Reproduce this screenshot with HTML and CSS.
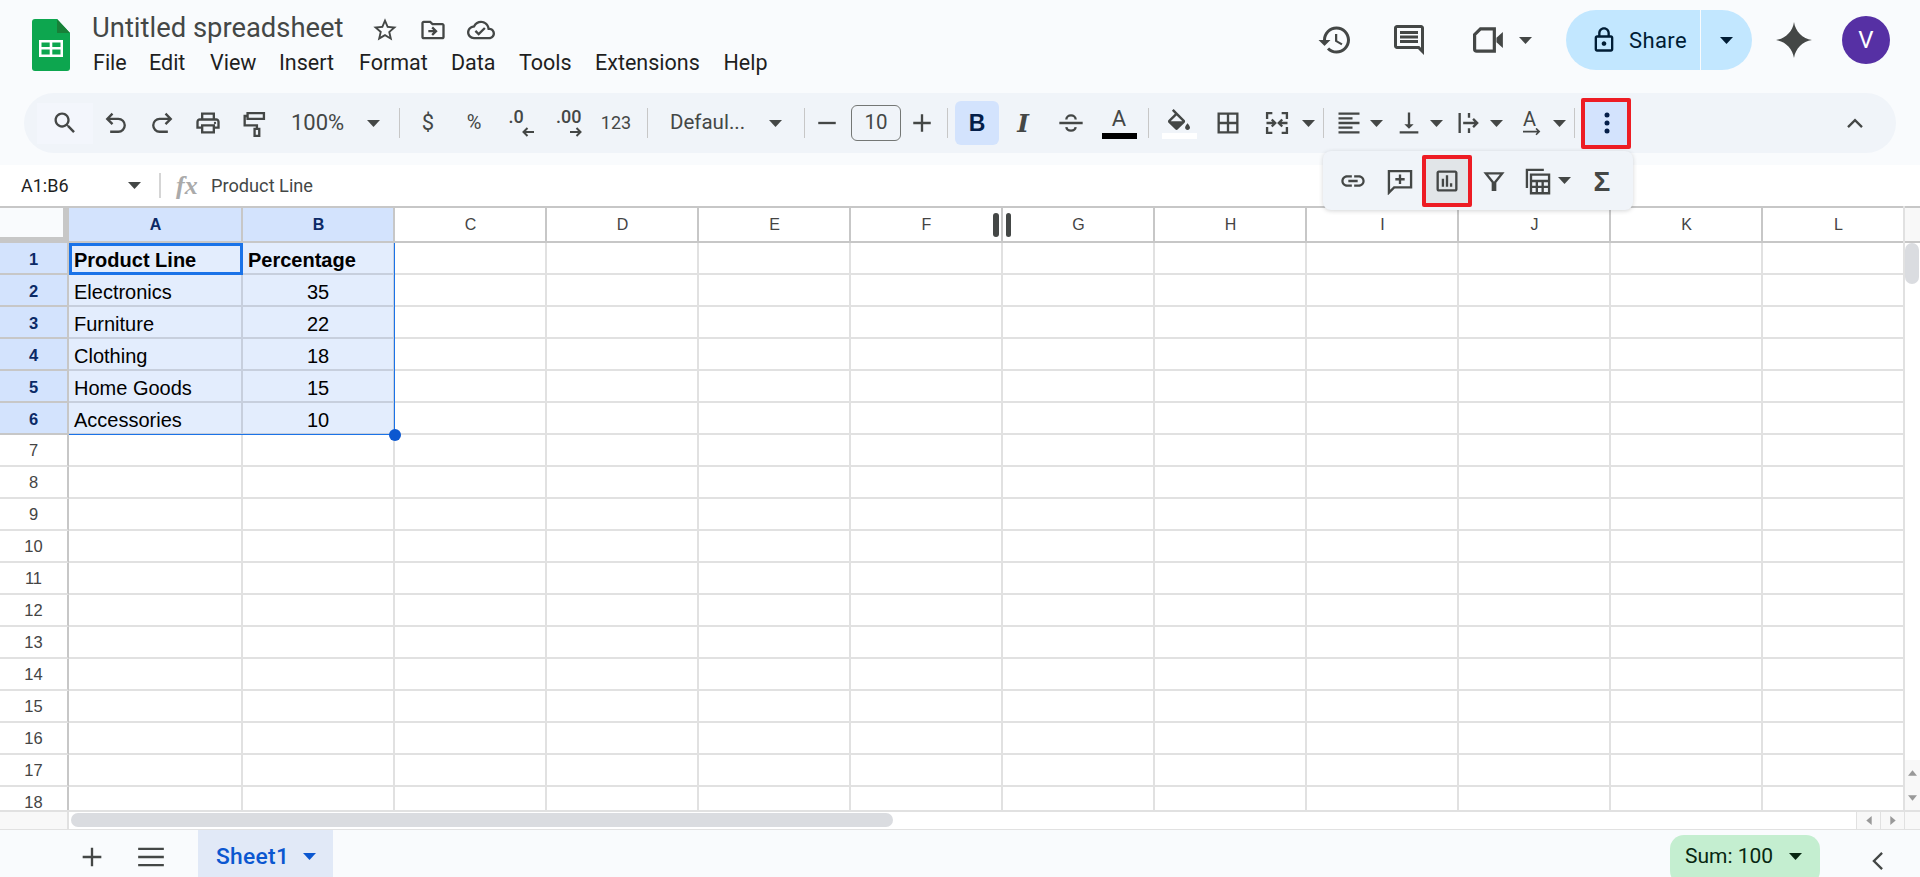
FILE: index.html
```html
<!DOCTYPE html>
<html lang="en">
<head>
<meta charset="utf-8">
<title>Untitled spreadsheet</title>
<link rel="stylesheet" href="styles.css">
</head>
<body>
<svg class="defs" aria-hidden="true"><symbol id="caret" viewBox="0 0 13 7"><path d="M0 0h13L6.5 7z"/></symbol></svg>
<header class="chrome">
  <div class="topbar">
    <svg class="logo" viewBox="0 0 38 52"><path class="logo-body" d="M3 0h22l13 14v35a3 3 0 0 1-3 3H3a3 3 0 0 1-3-3V3a3 3 0 0 1 3-3z"/><path class="logo-fold" d="M25 0l13 14H25z"/><path class="logo-grid" d="M7 21h24v17H7zm2.500 2.500v4.500h8.200v-4.500zm10.800 0v4.500h8.200v-4.500zM9.500 30.500v5h8.200v-5zm10.800 0v5h8.200v-5z" fill-rule="evenodd"/></svg>
    <div class="docinfo">
      <div class="titlerow">
        <span class="doctitle">Untitled spreadsheet</span>
        <svg class="ic title-star" viewBox="0 0 24 24"><path d="M22 9.240l-7.190-.620L12 2 9.190 8.630 2 9.240l5.460 4.730L5.820 21 12 17.270 18.180 21l-1.630-7.030L22 9.240zM12 15.400l-3.760 2.270 1-4.280-3.320-2.880 4.380-.380L12 6.100l1.710 4.040 4.380.380-3.320 2.880 1 4.280L12 15.400z"/></svg>
        <svg class="ic title-folder" viewBox="0 0 24 24"><path d="M20 6h-8l-2-2H4c-1.100 0-1.990.9-1.990 2L2 18c0 1.100.9 2 2 2h16c1.100 0 2-.9 2-2V8c0-1.100-.9-2-2-2zm0 12H4V6h5.170l2 2H20v10zm-8.010-9l-1.410 1.410L12.160 12H8v2h4.160l-1.590 1.590L11.990 17 16 13.010 11.990 9z"/></svg>
        <svg class="ic title-cloud" viewBox="0 0 24 24"><path d="M19.350 10.040C18.670 6.590 15.640 4 12 4 9.110 4 6.600 5.640 5.350 8.040 2.340 8.360 0 10.910 0 14c0 3.310 2.690 6 6 6h13c2.760 0 5-2.240 5-5 0-2.640-2.050-4.780-4.650-4.960zM19 18H6c-2.210 0-4-1.790-4-4 0-2.050 1.530-3.760 3.560-3.970l1.070-.110.5-.95C8.080 7.140 9.940 6 12 6c2.620 0 4.880 1.860 5.390 4.430l.3 1.500 1.530.11c1.560.1 2.780 1.410 2.780 2.960 0 1.650-1.350 3-3 3zm-9-3.820l-2.090-2.090L6.500 13.500 10 17l6.010-6.010-1.410-1.410z"/></svg>
      </div>
      <nav class="menus">
        <span class="m-file">File</span><span class="m-edit">Edit</span><span class="m-view">View</span><span class="m-insert">Insert</span><span class="m-format">Format</span><span class="m-data">Data</span><span class="m-tools">Tools</span><span class="m-ext">Extensions</span><span>Help</span>
      </nav>
    </div>
    <div class="actions">
      <svg class="ic act-history" viewBox="0 0 24 24"><path d="M13 3c-4.970 0-9 4.030-9 9H1l3.890 3.890.07.14L9 12H6c0-3.870 3.130-7 7-7s7 3.130 7 7-3.130 7-7 7c-1.930 0-3.680-.79-4.940-2.060l-1.420 1.420C8.270 19.990 10.510 21 13 21c4.970 0 9-4.030 9-9s-4.030-9-9-9zm-1 5v5l4.280 2.540.72-1.210-3.500-2.080V8H12z"/></svg>
      <svg class="ic act-comment" viewBox="0 0 24 24"><path d="M20 2H4c-1.100 0-2 .9-2 2v12c0 1.100.9 2 2 2h14l4 4V4c0-1.100-.9-2-2-2zm0 15.170L18.830 16H4V4h16v13.170zM6 12h12v2H6zm0-3h12v2H6zm0-3h12v2H6z"/></svg>
      <svg class="act-camera" viewBox="0 0 30 24"><path class="cam-body" d="M7 1.500H20V22.500H3.500A2 2 0 0 1 1.500 20.500V7z"/><path d="M22 10l6-5.500v15L22 14z"/></svg>
      <svg class="caret act-caret"><use href="#caret"/></svg>
      <div class="share">
        <div class="share-main">
          <svg class="ic share-lock" viewBox="0 0 24 24"><path d="M18 8h-1V6c0-2.760-2.240-5-5-5S7 3.240 7 6v2H6c-1.100 0-2 .9-2 2v10c0 1.100.9 2 2 2h12c1.100 0 2-.9 2-2V10c0-1.100-.9-2-2-2zM9 6c0-1.660 1.340-3 3-3s3 1.340 3 3v2H9V6zm9 14H6V10h12v10zm-6-3c1.100 0 2-.9 2-2s-.9-2-2-2-2 .9-2 2 .9 2 2 2z"/></svg>
          <span>Share</span>
        </div>
        <div class="share-drop"><svg class="caret"><use href="#caret"/></svg></div>
      </div>
      <svg class="ic gemini" viewBox="0 0 24 24"><path d="M12 0C12.900 6.300 17.700 11.100 24 12 17.700 12.900 12.900 17.700 12 24 11.100 17.700 6.300 12.900 0 12 6.300 11.100 11.100 6.300 12 0z"/></svg>
      <div class="avatar">V</div>
    </div>
  </div>

  <div class="toolbar">
    <button class="tb search"><svg class="ic" viewBox="0 0 24 24"><path d="M15.500 14h-.79l-.28-.27C15.410 12.590 16 11.110 16 9.500 16 5.910 13.090 3 9.500 3S3 5.910 3 9.500 5.910 16 9.500 16c1.610 0 3.090-.59 4.230-1.570l.27.28v.79l5 4.990L20.490 19l-4.990-5zm-6 0C7.010 14 5 11.990 5 9.500S7.010 5 9.500 5 14 7.010 14 9.500 11.990 14 9.500 14z"/></svg></button>
    <button class="tb"><svg class="ic st" viewBox="0 0 24 24"><path d="M9 4L4.500 8.500 9 13M5 8.500h9a5.500 5.500 0 0 1 0 11H7"/></svg></button>
    <button class="tb"><svg class="ic st" viewBox="0 0 24 24"><path d="M15 4l4.500 4.500L15 13M19 8.500h-9a5.500 5.500 0 0 0 0 11h7"/></svg></button>
    <button class="tb"><svg class="ic" viewBox="0 0 24 24"><path d="M19 8h-1V3H6v5H5c-1.660 0-3 1.340-3 3v6h4v4h12v-4h4v-6c0-1.660-1.340-3-3-3zM8 5h8v3H8V5zm8 12v2H8v-4h8v2zm2-2v-2H6v2H4v-4c0-.55.45-1 1-1h14c.55 0 1 .45 1 1v4h-2z"/><circle cx="18" cy="12" r="1"/></svg></button>
    <button class="tb"><svg class="ic st" viewBox="0 0 24 24"><path d="M6.500 3.500h14v5h-14zM6.500 6H4v8h10.500v3M12.500 17h4v6h-4z"/></svg></button>
    <div class="tb-zoom"><span>100%</span><svg class="caret"><use href="#caret"/></svg></div>
    <i class="sep"></i>
    <button class="tb tb-text dollar">$</button>
    <button class="tb tb-text pct">%</button>
    <button class="tb tb-dec"><span class="dec"><b>.0</b><svg class="dec-arrow" viewBox="0 0 12 10"><path d="M12 5H2M5.500 1L1.500 5l4 4"/></svg></span></button>
    <button class="tb tb-dec"><span class="dec dec2"><b>.00</b><svg class="dec-arrow" viewBox="0 0 12 10"><path d="M0 5h10M6.500 1l4 4-4 4"/></svg></span></button>
    <button class="tb tb-text n123">123</button>
    <i class="sep sep-font"></i>
    <div class="tb-font"><span>Defaul...</span><svg class="caret"><use href="#caret"/></svg></div>
    <i class="sep"></i>
    <button class="tb tb-step"><svg class="ic st" viewBox="0 0 24 24"><path d="M4.500 12h15"/></svg></button>
    <div class="sizebox">10</div>
    <button class="tb tb-step step-plus"><svg class="ic st" viewBox="0 0 24 24"><path d="M4.500 12h15M12 4.500v15"/></svg></button>
    <i class="sep sep-size"></i>
    <button class="tb tb-bold">B</button>
    <button class="tb tb-italic">I</button>
    <button class="tb tb-strike"><svg class="ic st" viewBox="0 0 24 24"><path d="M2 12h20M16 9c0-2-1.800-3.500-4-3.500S8 7 8 9M8 15.500c.3 2 2 3 4 3s3.700-1.200 4-3"/></svg></button>
    <button class="tb tb-color"><span class="color-a">A</span><i class="bar bar-black"></i></button>
    <i class="sep sep-color"></i>
    <button class="tb tb-fill"><svg class="fill-ic" viewBox="3 0 18 17"><path d="M16.560 8.940L7.620 0 6.210 1.410l2.380 2.380-5.150 5.150c-.59.59-.59 1.540 0 2.120l5.500 5.500c.29.29.68.44 1.060.44s.77-.15 1.060-.44l5.500-5.500c.59-.58.59-1.530 0-2.120zM5.210 10L10 5.210 14.790 10H5.210zM19 11.500s-2 2.170-2 3.500c0 1.100.9 2 2 2s2-.9 2-2c0-1.330-2-3.500-2-3.500z"/></svg><i class="bar bar-white"></i></button>
    <button class="tb tb-borders"><svg class="ic" viewBox="0 0 24 24"><path d="M3 3v18h18V3H3zm8 16H5v-6h6v6zm0-8H5V5h6v6zm8 8h-6v-6h6v6zm0-8h-6V5h6v6z"/></svg></button>
    <button class="tb tb-merge"><svg class="ic st" viewBox="0 0 24 24"><path d="M8 3.500H3.500v5M8 20.500H3.500v-5M16 3.500h4.500v5M16 20.500h4.500v-5M3 12h7M7.500 9l3 3-3 3M21 12h-7M16.500 9l-3 3 3 3"/></svg></button>
    <svg class="caret tbc"><use href="#caret"/></svg>
    <i class="sep sep-merge"></i>
    <button class="tb tb-arr first"><svg class="ic" viewBox="0 0 24 24"><path d="M15 15H3v2h12v-2zm0-8H3v2h12V7zM3 13h18v-2H3v2zm0 8h18v-2H3v2zM3 3v2h18V3H3z"/></svg></button>
    <svg class="caret tbc"><use href="#caret"/></svg>
    <button class="tb tb-arr mid"><svg class="ic" viewBox="0 0 24 24"><path d="M16 13h-3V3h-2v10H8l4 4 4-4zM4 19v2h16v-2H4z"/></svg></button>
    <svg class="caret tbc"><use href="#caret"/></svg>
    <button class="tb tb-arr mid"><svg class="ic st" viewBox="0 0 24 24"><path d="M4 3.500v17M12 3.500v4M12 16.500v4M7 12h12M15.500 8.500L19 12l-3.500 3.500"/></svg></button>
    <svg class="caret tbc"><use href="#caret"/></svg>
    <button class="tb tb-arr rot"><span class="rotate"><b>A</b><svg viewBox="0 0 20 10"><path d="M0 4h18M14.500 .5L18 4l-3.500 3.500"/></svg></span></button>
    <svg class="caret tbc"><use href="#caret"/></svg>
    <i class="sep sep-rot"></i>
    <button class="tb tb-more"><svg viewBox="0 0 6 22"><circle cx="3" cy="3" r="2.500"/><circle cx="3" cy="11" r="2.500"/><circle cx="3" cy="19" r="2.500"/></svg></button>
    <button class="tb tb-collapse"><svg class="ic st" viewBox="0 0 24 24"><path d="M6 15.500l6-6 6 6"/></svg></button>
  </div>
</header>

<div class="popup">
  <button class="pop"><svg class="ic" viewBox="0 0 24 24"><path d="M3.900 12c0-1.710 1.390-3.100 3.100-3.100h4V7H7c-2.760 0-5 2.240-5 5s2.240 5 5 5h4v-1.900H7c-1.710 0-3.100-1.390-3.100-3.100zM8 13h8v-2H8v2zm9-6h-4v1.900h4c1.710 0 3.100 1.390 3.100 3.100s-1.390 3.100-3.100 3.100h-4V17h4c2.760 0 5-2.240 5-5s-2.240-5-5-5z"/></svg></button>
  <button class="pop pop-add"><svg class="ic st" viewBox="0 0 24 24"><path d="M2.500 3.500h19v14H7l-4.500 4.500zM12 6.500v8M8 10.500h8"/></svg></button>
  <button class="pop pop-chart"><svg class="ic" viewBox="0 0 24 24"><path d="M19 3H5c-1.100 0-2 .9-2 2v14c0 1.100.9 2 2 2h14c1.100 0 2-.9 2-2V5c0-1.100-.9-2-2-2zm0 16H5V5h14v14zM7.500 10h2v7h-2zm3.500-3h2v10h-2zm3.500 7h2v3h-2z"/></svg></button>
  <button class="pop pop-filter"><svg class="ic st" viewBox="0 0 24 24"><path d="M5 5.500h14l-6 7.500v6.500h-2V13z"/></svg></button>
  <button class="pop pop-calc"><svg class="ic st" viewBox="0 0 24 24"><path d="M2.500 18V2.500H17M6 6.500h15.500v16H6zM6 12h15.500M6 17h15.500M11 12v10M16 12v10"/></svg></button>
  <svg class="caret"><use href="#caret"/></svg>
  <button class="pop pop-sum">Σ</button>
</div>

<div class="formula">
  <div class="namebox"><span>A1:B6</span><svg class="caret"><use href="#caret"/></svg></div>
  <i class="fsep"></i>
  <span class="fx">fx</span>
  <span class="ftext">Product Line</span>
</div>

<main class="gridarea">
  <div class="sheet">
    <div class="row head">
      <div class="corner"></div>
      <div class="ch sel">A</div><div class="ch sel">B</div><div class="ch">C</div><div class="ch">D</div><div class="ch">E</div><div class="ch">F</div><div class="ch">G</div><div class="ch">H</div><div class="ch">I</div><div class="ch">J</div><div class="ch">K</div><div class="ch">L</div>
    </div>
    <div class="row"><div class="rh sel">1</div><div class="c s b">Product Line</div><div class="c s b">Percentage</div><div class="rest"></div></div>
    <div class="row"><div class="rh sel">2</div><div class="c s">Electronics</div><div class="c s n">35</div><div class="rest"></div></div>
    <div class="row"><div class="rh sel">3</div><div class="c s">Furniture</div><div class="c s n">22</div><div class="rest"></div></div>
    <div class="row"><div class="rh sel">4</div><div class="c s">Clothing</div><div class="c s n">18</div><div class="rest"></div></div>
    <div class="row"><div class="rh sel">5</div><div class="c s">Home Goods</div><div class="c s n">15</div><div class="rest"></div></div>
    <div class="row"><div class="rh sel">6</div><div class="c s">Accessories</div><div class="c s n">10</div><div class="rest"></div></div>
    <div class="row"><div class="rh">7</div><div class="c"></div><div class="c"></div><div class="rest"></div></div>
    <div class="row"><div class="rh">8</div><div class="c"></div><div class="c"></div><div class="rest"></div></div>
    <div class="row"><div class="rh">9</div><div class="c"></div><div class="c"></div><div class="rest"></div></div>
    <div class="row"><div class="rh">10</div><div class="c"></div><div class="c"></div><div class="rest"></div></div>
    <div class="row"><div class="rh">11</div><div class="c"></div><div class="c"></div><div class="rest"></div></div>
    <div class="row"><div class="rh">12</div><div class="c"></div><div class="c"></div><div class="rest"></div></div>
    <div class="row"><div class="rh">13</div><div class="c"></div><div class="c"></div><div class="rest"></div></div>
    <div class="row"><div class="rh">14</div><div class="c"></div><div class="c"></div><div class="rest"></div></div>
    <div class="row"><div class="rh">15</div><div class="c"></div><div class="c"></div><div class="rest"></div></div>
    <div class="row"><div class="rh">16</div><div class="c"></div><div class="c"></div><div class="rest"></div></div>
    <div class="row"><div class="rh">17</div><div class="c"></div><div class="c"></div><div class="rest"></div></div>
    <div class="row"><div class="rh">18</div><div class="c"></div><div class="c"></div><div class="rest"></div></div>
    <div class="range"></div>
    <div class="active"></div>
    <div class="handle"></div>
    <div class="freeze"><i></i><i></i></div>
  </div>
  <div class="vscroll">
    <div class="vs-top"></div>
    <div class="vs-track"><div class="vs-thumb"></div></div>
    <div class="vs-btn"><svg viewBox="0 0 10 6"><path d="M0 6h10L5 0z"/></svg></div>
    <div class="vs-btn"><svg viewBox="0 0 10 6"><path d="M0 0h10L5 6z"/></svg></div>
  </div>
</main>

<div class="hscroll">
  <div class="hs-corner"></div>
  <div class="hs-track"><div class="hs-thumb"></div></div>
  <div class="hs-btn"><svg viewBox="0 0 6 10"><path d="M6 0v10L0 5z"/></svg></div>
  <div class="hs-btn"><svg viewBox="0 0 6 10"><path d="M0 0v10l6-5z"/></svg></div>
  <div class="hs-end"></div>
</div>

<footer class="tabs">
  <button class="tab-ic"><svg class="ic st" viewBox="0 0 24 24"><path d="M4 12h16M12 4v16"/></svg></button>
  <button class="tab-ic"><svg class="ic st" viewBox="0 0 24 24"><path d="M1 5h22M1 12h22M1 19h22"/></svg></button>
  <div class="tab"><span>Sheet1</span><svg class="caret"><use href="#caret"/></svg></div>
  <div class="sum"><span>Sum: 100</span><svg class="caret"><use href="#caret"/></svg></div>
  <button class="tab-ic tab-collapse"><svg class="ic st" viewBox="0 0 24 24"><path d="M15.500 5l-7 7 7 7"/></svg></button>
</footer>
</body>
</html>
```

FILE: styles.css
```css
* { box-sizing: border-box; }
html, body { margin: 0; height: 877px; overflow: hidden; }
body {
  position: relative;
  width: 1920px;
  background: #fff;
  font-family: Roboto, "Liberation Sans", sans-serif;
  color: #1f1f1f;
  display: flex;
  flex-direction: column;
}
button { border: 0; background: none; padding: 0; margin: 0; font: inherit; color: inherit; display: flex; align-items: center; justify-content: center; }
.defs { display: none; }
.ic { width: 28px; height: 28px; fill: #444746; flex: none; display: block; }
.ic.st { fill: none; stroke: #444746; stroke-width: 2; }
.caret { width: 13px; height: 7px; fill: #444746; flex: none; display: block; }

/* header */
.chrome { height: 165px; background: #f9fbfd; flex: none; }
.topbar { height: 93px; display: flex; position: relative; }
.logo { width: 38px; height: 52px; margin: 19px 0 0 32px; flex: none; }
.logo-body { fill: #0da64f; }
.logo-fold { fill: #188038; }
.logo-grid { fill: #fff; }
.docinfo { margin-left: 22px; padding-top: 11px; }
.titlerow { display: flex; align-items: center; height: 34px; }
.doctitle { font-size: 27.400px; color: #444746; width: 279px; white-space: nowrap; }
.title-star { width: 28px; height: 28px; margin-top: 4px; }
.title-folder { margin-left: 20px; margin-top: 4px; }
.title-cloud { margin-left: 20px; margin-top: 4px; }
.menus { display: flex; font-size: 21.500px; color: #1f1f1f; height: 28px; align-items: center; margin-top: 3px; white-space: nowrap; padding-left: 1px; }
.menus span { display: block; }
.m-file { width: 56px; } .m-edit { width: 61px; } .m-view { width: 69px; } .m-insert { width: 80px; }
.m-format { width: 92px; } .m-data { width: 68px; } .m-tools { width: 76px; } .m-ext { width: 128.5px; }

.actions { margin-left: auto; display: flex; align-items: center; height: 60px; margin-top: 10px; padding-right: 30px; }
.act-history { width: 36px; height: 36px; }
.act-comment { width: 36px; height: 36px; margin-left: 38px; }
.act-camera { width: 32px; height: 26px; margin-left: 46px; fill: #444746; }
.cam-body { fill: none; stroke: #444746; stroke-width: 3; }
.act-caret { margin-left: 14px; }
.share { width: 186px; height: 60px; margin-left: 34px; background: #c2e7ff; border-radius: 30px; display: flex; color: #001d35; }
.share-main { width: 135px; border-right: 1.5px solid #f9fbfd; display: flex; align-items: center; padding-left: 24px; font-size: 22px; font-weight: 400; }
.share-main span { margin-left: 11px; letter-spacing: .4px; }
.share-lock { fill: #001d35; width: 28px; height: 28px; }
.share-drop { flex: 1; display: flex; align-items: center; justify-content: center; }
.share-drop .caret { fill: #001d35; }
.gemini { width: 36px; height: 36px; margin-left: 24px; }
.avatar { width: 48px; height: 48px; border-radius: 50%; margin-left: 30px; background: #5630a4; color: #fff; font-size: 24px; display: flex; align-items: center; justify-content: center; }

/* toolbar */
.toolbar { margin-left: 24px; width: 1872px; height: 60px; background: #f0f4f9; border-radius: 30px; display: flex; align-items: center; padding-left: 13px; color: #444746; }
.tb { width: 46px; height: 44px; flex: none; }
.search { width: 56px; height: 41px; background: #f3f6fc; }
.tb-zoom { width: 116px; display: flex; align-items: center; padding-left: 14px; font-size: 22px; }
.tb-zoom span { width: 76px; margin-top: -2px; }
.sep { display: block; width: 1px; height: 30px; background: #c7c7c7; margin: 0 5px 0 6px; flex: none; }
.tb-text { font-size: 20px; padding-bottom: 2px; }
.dollar { font-size: 22px; }
.n123 { font-size: 18px; }
.tb-dec { width: 48px; }
.dec { display: flex; flex-direction: column; align-items: flex-start; width: 25px; }
.dec b { font-size: 18px; font-weight: 500; line-height: 15px; }
.dec-arrow { width: 12px; height: 10px; margin: 3px 0 0 13px; fill: none; stroke: #444746; stroke-width: 2; }
.dec2 { align-items: flex-end; }
.dec2 .dec-arrow { margin-left: 0; }
.sep-font { margin-left: 8px; margin-right: 6px; }
.tb-font { width: 144px; display: flex; align-items: center; padding-left: 16px; font-size: 20.500px; }
.tb-font span { width: 99px; margin-top: -2px; }
.tb-step { width: 34px; }
.sizebox { width: 50px; height: 36px; margin-left: 7px; padding-bottom: 2px; border: 1.500px solid #747775; border-radius: 6px; display: flex; align-items: center; justify-content: center; font-size: 20.500px; }
.step-plus { margin-left: 4px; }
.sep-size { margin: 0 0 0 8px; }
.tb-bold { width: 44px; height: 44px; margin-left: 7px; background: #d3e3fd; border-radius: 6px; font-family: "Liberation Sans", sans-serif; font-weight: 700; font-size: 23px; color: #041e49; }
.tb-italic { margin-left: 1px; font-family: "DejaVu Serif", serif; font-style: italic; font-weight: 700; font-size: 25px; }
.tb-strike { width: 50px; }
.tb-color { flex-direction: column; }
.color-a { font-size: 22px; line-height: 22px; margin-top: 1px; }
.bar { display: block; width: 35px; height: 6px; margin-top: 3px; flex: none; }
.bar-black { background: #000; }
.bar-white { background: #fff; }
.sep-color { margin: 0 7px 0 6px; }
.tb-fill { flex-direction: column; height: 32px; margin-top: 2px; }
.fill-ic { width: 22px; height: 21px; fill: #444746; flex: none; }
.tb-borders { margin-left: 3px; }
.tb-merge { margin-left: 3px; }
.sep-merge { margin: 0 5px 0 6px; }
.tb-arr { width: 38px; }
.tb-arr.first { width: 39px; }
.tb-arr.mid { margin-left: 5px; }
.tb-arr.rot { margin-left: 8px; }
.tbc { margin: 0 2px 0 2px; }
.rotate { display: flex; flex-direction: column; align-items: flex-start; width: 20px; }
.rotate b { font-weight: 400; font-size: 20px; line-height: 18px; margin-left: 1px; }
.rotate svg { width: 20px; height: 9px; fill: none; stroke: #444746; stroke-width: 1.800; }
.sep-rot { margin: 0 6px 0 6px; }
.tb-more { width: 50px; height: 51px; background: #d3e3fd; border: 4px solid #ed1c24; border-radius: 2px; padding-left: 1px; }
.tb-more svg { width: 6px; height: 22px; fill: #041e49; }
.tb-collapse { margin-left: auto; margin-right: 18px; }

/* popup */
.popup { position: absolute; left: 1323px; top: 151px; width: 310px; height: 59px; background: #f0f4f9; border-radius: 8px; box-shadow: 0 1px 4px rgba(60,64,67,.22); display: flex; align-items: center; padding-left: 7px; z-index: 5; }
.pop { width: 46px; height: 46px; flex: none; }
.pop-add { width: 44px; margin-left: 2px; }
.pop-chart { width: 50px; height: 52px; background: #e1e5e8; border: 4px solid #ed1c24; border-radius: 2px; }
.pop-filter { width: 44px; }
.pop-calc { width: 44px; }
.popup .caret { margin: 0 16px 0 -2px; }
.pop-sum { width: 30px; font-family: "Liberation Sans", sans-serif; font-weight: 700; font-size: 28px; color: #444746; padding-top: 3px; }

/* formula bar */
.formula { height: 41px; flex: none; background: #fff; display: flex; align-items: center; }
.namebox { width: 159px; display: flex; align-items: center; padding-left: 21px; font-size: 18px; }
.namebox span { width: 107px; }
.fsep { display: block; width: 2px; height: 25px; background: #d5d5d5; }
.fx { margin-left: 15px; width: 35px; font-family: "Liberation Serif", serif; font-style: italic; font-weight: 700; font-size: 26px; color: #aaa; line-height: 30px; }
.ftext { font-size: 18.200px; color: #444746; }

/* grid */
.gridarea { height: 604px; flex: none; display: flex; }
.sheet { width: 1903px; position: relative; overflow: hidden; }
.row { display: flex; width: 1914px; height: 32px; }
.row.head { height: 37px; }
.corner { width: 69px; height: 37px; flex: none; background: #f9fbfd; border-top: 2px solid #c7c7c7; border-right: 6px solid #c7c7c7; border-bottom: 6px solid #c7c7c7; }
.ch { width: 152px; height: 37px; flex: none; background: #fff; border-top: 2px solid #c7c7c7; border-right: 2px solid #c7c7c7; border-bottom: 2px solid #c7c7c7; display: flex; align-items: center; justify-content: center; padding-left: 1px; font-family: "Liberation Sans", sans-serif; font-size: 16px; color: #444; }
.ch:nth-child(2) { width: 174px; }
.ch.sel { background: #d3e3fd; color: #0b2a66; font-weight: 700; }
.rh { width: 69px; flex: none; background: #fff; border-right: 2px solid #c7c7c7; border-bottom: 2px solid #e1e1e1; display: flex; align-items: center; justify-content: center; font-family: "Liberation Sans", sans-serif; font-size: 16.500px; color: #444; }
.rh.sel { background: #d3e3fd; color: #0b2a66; font-weight: 700; border-bottom-color: #c7c7c7; padding-top: 2px; }
.c { width: 152px; flex: none; border-right: 2px solid #e1e1e1; border-bottom: 2px solid #e1e1e1; font-family: "Liberation Sans", sans-serif; font-size: 20px; color: #000; padding: 0 4px 0 5px; line-height: 34px; white-space: nowrap; }
.c:nth-child(2) { width: 174px; }
.c.s { background: #e3edfd; border-color: #c7cfdd; }
.c.b { font-weight: 700; }
.c.n { text-align: center; padding: 0; }
.rest { width: 1519px; flex: none; border-bottom: 2px solid #e1e1e1; background: repeating-linear-gradient(to right, transparent 0, transparent 150px, #e1e1e1 150px, #e1e1e1 152px); }
.range { position: absolute; left: 69px; top: 37px; width: 325.500px; height: 192px; border-right: 1.500px solid #1a73e8; border-bottom: 1.500px solid #1a73e8; }
.active { position: absolute; left: 69px; top: 37px; width: 174px; height: 32px; border: 3px solid #1a73e8; }
.handle { position: absolute; left: 389px; top: 223px; width: 12px; height: 12px; border-radius: 50%; background: #0b57d0; }
.freeze { position: absolute; left: 993px; top: 7px; display: flex; gap: 7px; }
.freeze i { display: block; width: 5.500px; height: 24px; border-radius: 3px; background: #444746; }

.vscroll { width: 17px; flex: none; display: flex; flex-direction: column; background: #fff; border-left: 2px solid #e1e1e1; }
.vs-top { height: 37px; background: #f8f8f8; border-top: 2px solid #c7c7c7; border-bottom: 2px solid #c7c7c7; flex: none; }
.vs-track { flex: 1; position: relative; }
.vs-thumb { width: 14px; height: 41px; position: absolute; left: 0; top: 0; border-radius: 7px; background: #dadce0; }
.vs-btn { height: 25px; background: #f8f8f8; display: flex; align-items: center; justify-content: center; flex: none; }
.vs-btn svg { width: 9px; height: 6px; fill: #999; }

.hscroll { height: 20px; flex: none; display: flex; background: #fff; border-top: 2px solid #e1e1e1; border-bottom: 1px solid #e1e1e1; }
.hs-corner { width: 69px; background: #f8f8f8; border-right: 2px solid #e1e1e1; flex: none; }
.hs-track { flex: 1; position: relative; padding: 1px 0 0 2px; }
.hs-thumb { width: 822px; height: 14px; border-radius: 7px; background: #dadce0; }
.hs-btn { width: 24px; background: #f8f8f8; border-left: 1px solid #e1e1e1; display: flex; align-items: center; justify-content: center; flex: none; }
.hs-btn svg { width: 6px; height: 9px; fill: #999; }
.hs-end { width: 16px; background: #f8f8f8; border-left: 1px solid #e1e1e1; flex: none; }

/* tabs */
.tabs { flex: 1; background: #f9fbfd; display: flex; padding-left: 69px; position: relative; overflow: hidden; }
.tab-ic { width: 46px; height: 48px; flex: none; padding-top: 5px; }
.tab-ic + .tab-ic { margin-left: 13px; }
.tab { width: 135px; margin-left: 24px; background: #e1e9f7; display: flex; align-items: center; padding: 6px 0 0 18px; color: #0b57d0; font-size: 22.800px; font-weight: 500; letter-spacing: .3px; }
.tab span { width: 87px; }
.tab .caret { fill: #0b57d0; }
.sum { width: 150px; height: 50px; margin-top: 5px; margin-left: auto; background: #c4eed0; border-radius: 14px; display: flex; align-items: center; padding: 0 0 8px 15px; font-size: 21px; color: #072711; }
.sum span { width: 104px; }
.sum .caret { fill: #072711; }
.tab-collapse { margin-left: 35px; margin-right: 19px; margin-top: 4px; }
```
